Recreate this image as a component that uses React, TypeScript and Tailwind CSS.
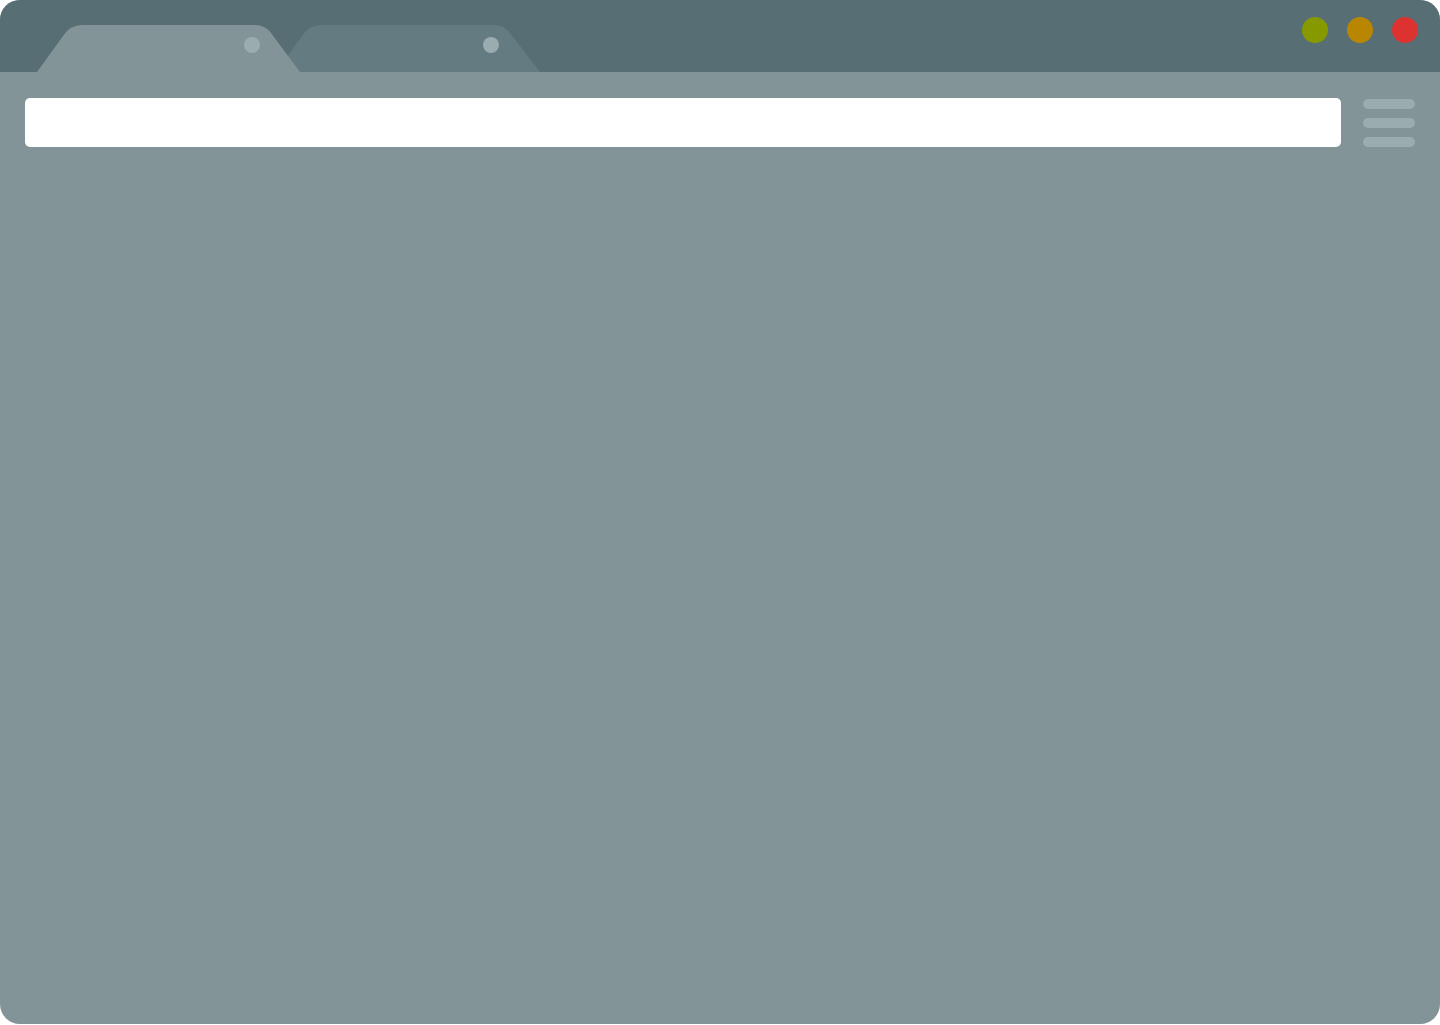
export default function App() {
  return (
    <div className="w-[1440px] h-[1025px] bg-white">
      <div className="flex h-[1024px] w-[1440px] flex-col overflow-hidden rounded-[20px] bg-[#829497]">
        <div className="flex h-[72px] shrink-0 items-start justify-between bg-[#576f74]">
          <svg width="560" height="72" viewBox="0 0 560 72" className="block">
            <path d="M276 72 L302 36 Q309 25 321 25 L494 25 Q504 25 510 33 L540 72 Z" fill="#647b81" />
            <circle cx="491" cy="45" r="8" fill="#9aacaf" />
            <path d="M37 72 L63 36 Q70 25 82 25 L255 25 Q265 25 271 33 L300 72 Z" fill="#829497" />
            <circle cx="252" cy="45" r="8" fill="#9aacaf" />
          </svg>
          <div className="flex gap-[19px] pr-[22px] pt-[17px]">
            <span className="h-[26px] w-[26px] rounded-full bg-[#869a00]" />
            <span className="h-[26px] w-[26px] rounded-full bg-[#b88600]" />
            <span className="h-[26px] w-[26px] rounded-full bg-[#dc3330]" />
          </div>
        </div>
        <div className="flex gap-[22px] pl-[25px] pr-[25px] pt-[26px]">
          <div className="h-[49px] w-[1316px] rounded-[5px] bg-white" />
          <div className="flex w-[52px] flex-col gap-[9px] pt-px">
            <span className="h-[10px] rounded-full bg-[#9aacaf]" />
            <span className="h-[10px] rounded-full bg-[#9aacaf]" />
            <span className="h-[10px] rounded-full bg-[#9aacaf]" />
          </div>
        </div>
      </div>
    </div>
  );
}
